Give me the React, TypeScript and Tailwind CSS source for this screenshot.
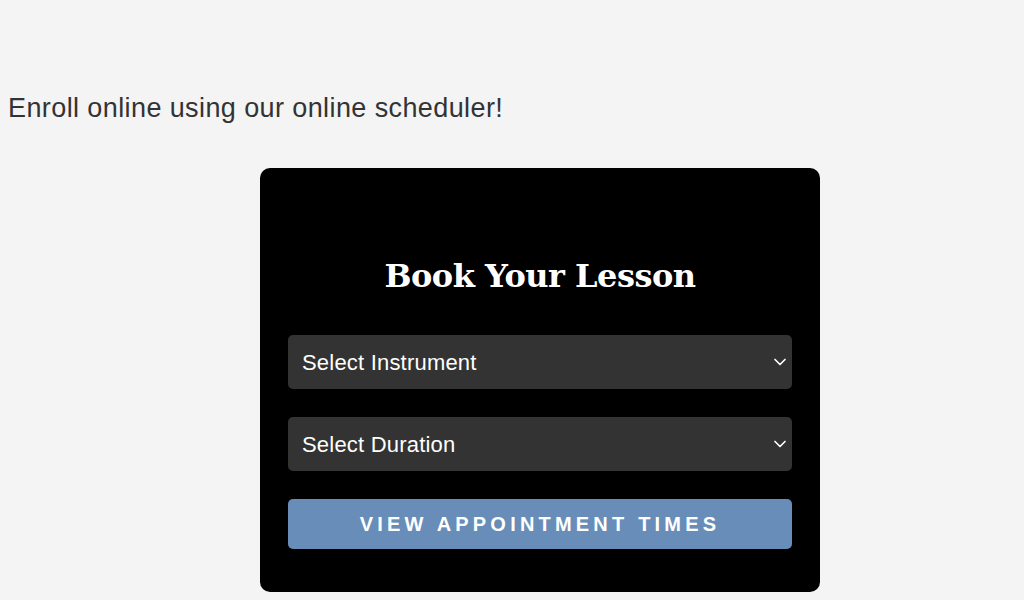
import { ChevronDown } from "lucide-react";

const selects = ["Select Instrument", "Select Duration"];

export default function App() {
  return (
    <div className="min-h-[600px] bg-[#f4f4f4] px-2 pt-[88px] font-['Liberation_Sans',Arial,sans-serif]">
      <p className="text-[27px] leading-[40px] tracking-[0.4px] text-[#333]">Enroll online using our online scheduler!</p>

      <div className="ml-[252px] mt-[40px] flex w-[560px] flex-col rounded-[10px] bg-black px-7 pb-[43px] pt-[84px]">
        <h2 className="mb-[35px] text-center font-['DejaVu_Serif',Georgia,serif] text-[32px] font-bold leading-[48px] tracking-[-0.5px] text-white">
          Book Your Lesson
        </h2>

        <div className="flex flex-col gap-7">
          {selects.map((label) => (
            <div key={label} className="relative">
              <select
                defaultValue=""
                className="h-[54px] w-full appearance-none rounded-[5px] bg-[#333] pl-[14px] pr-10 text-[22px] tracking-[0.2px] text-white outline-none"
              >
                <option value="">{label}</option>
              </select>
              <ChevronDown
                size={20}
                strokeWidth={2}
                className="pointer-events-none absolute right-[2px] top-1/2 -translate-y-1/2 text-white"
              />
            </div>
          ))}

          <button className="h-[50px] w-full rounded-[5px] bg-[#678db8] text-[20px] font-bold uppercase tracking-[4.2px] text-white">
            View Appointment Times
          </button>
        </div>
      </div>
    </div>
  );
}
